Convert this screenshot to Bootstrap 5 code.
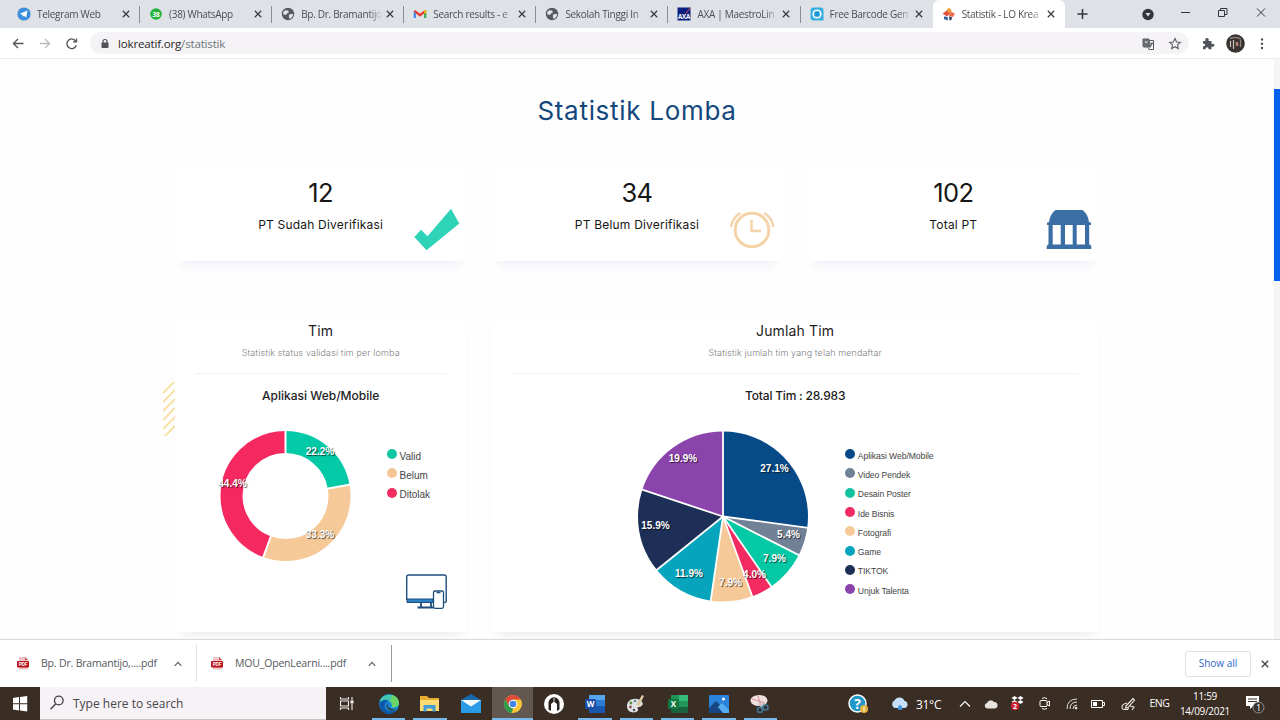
<!DOCTYPE html>
<html lang="id">
<head>
<meta charset="utf-8">
<title>Statistik - LO Kreatif</title>
<link rel="stylesheet" href="https://cdn.jsdelivr.net/npm/bootstrap@5.3.0/dist/css/bootstrap.min.css">
<style>
body{width:1280px;height:720px;overflow:hidden;font-family:"Open Sans","Noto Sans",sans-serif;background:#fff}
svg{display:block;flex:none}
.tabstrip{height:28px;background:#dee1e6;padding-left:8px}
.btab{width:132.1px;height:28px;padding-left:9px;font-size:10px;letter-spacing:-.3px;color:#4b4f54;flex:none;position:relative}
.btab .ttl{width:84px;margin-left:6px;white-space:nowrap;-webkit-mask-image:linear-gradient(90deg,#000 68px,transparent 82px);mask-image:linear-gradient(90deg,#000 68px,transparent 82px)}
.btab.sep{border-right:1px solid #8b8e93;height:17px}
.btab.on{background:#fff;border-radius:6px 6px 0 0;align-self:flex-end;height:28px}
.toolbar{height:31px;border-bottom:1px solid #ececee}
.omni{height:22px;border-radius:11px;background:#f5f3f5;width:1099px;margin-left:5px}
.url{font-size:11.6px;color:#26282b;letter-spacing:-.2px;padding-top:2px}
.page{height:580px;background:#fefefe;font-family:Inter,"Open Sans",sans-serif}
.inner{width:925px;margin-left:174.5px}
.scroller{width:6px;background:#f5f5f6}
.thumb{height:192px;margin-top:30px;background:#0560ee}
.h-main{color:#14487c;font-size:26px;line-height:34px;font-weight:400;letter-spacing:.7px;padding-top:35px;margin:0}
.stats{padding-top:37px}
.panels{padding-top:55px}
.stat,.panel{background:#fff;box-shadow:0 0 3px rgba(40,40,120,.02),0 12px 9px -8px rgba(60,60,190,.075);border-radius:4px}
.panel{box-shadow:0 0 3px rgba(40,40,120,.02),0 10px 10px -6px rgba(60,60,90,.08)}
.stat{height:96px;position:relative;color:#161616}
.stat .num{font-size:25.5px;line-height:30px;font-weight:400;letter-spacing:-.6px;padding-top:13px}
.stat .lbl{font-size:12px;line-height:16px;margin-top:9px;font-weight:400;letter-spacing:.2px}
.stat svg{position:absolute;right:6px;bottom:9px}
.panel{height:316px;position:relative}
.panel .t1{font-size:14px;line-height:18px;font-weight:400;letter-spacing:.15px;padding-top:6px;color:#1c1c1c}
.panel .t2{font-size:9px;line-height:12px;color:#808080;margin-top:7px;font-weight:300;letter-spacing:.12px}
.panel .rule{height:1px;background:#f2f2f2;margin:14px 20px 0}
.panel .t3{font-size:12px;line-height:16px;font-weight:450;margin-top:14px;margin-bottom:-1px;color:#1c1c1c}
.panel .total{letter-spacing:-.2px}
.chartbox{height:200px}
.pct{font:bold 10px "Liberation Sans",sans-serif;fill:#fff;text-anchor:middle;text-shadow:1px 1px 1px rgba(0,0,0,.65)}
.leg{font-family:"Liberation Sans",sans-serif;color:#444;padding-top:42px}
.leg div{height:19.3px}
.leg span{padding:3px 0 0 3px}
.leg i{width:10px;height:10px;border-radius:50%;flex:none;margin-top:-1px}
.leg-lg{padding-left:6px;font-size:10px}
.leg-sm{padding-left:14px;font-size:8.6px;letter-spacing:-.08px}
.devices{position:absolute;right:20px;bottom:22px}
.hatch{position:absolute;left:-12px;top:66px}
.dlbar{height:48px;border-top:1px solid #d9d9dc;background:#fff;font-size:10.5px;letter-spacing:-.18px;color:#55585c}
.dl{height:37px;white-space:nowrap;flex:none}
.dl span{width:145px;padding-left:12px}
.showall{width:66px;height:26px;border:1px solid #dfe1e5;border-radius:3px;color:#2f66c8;font-size:10px;font-weight:500;letter-spacing:0}
.taskbar{height:33px;background:#3a2d24;color:#fff}
.find{width:286px;height:33px;background:#f6f2f5;color:#45464a;font-size:12px;padding-left:10px;border-bottom:1px solid #c9c4c4}
.app{width:41.3px;height:33px;position:relative}
.app.run::after{content:"";position:absolute;left:4px;right:4px;bottom:0;height:2px;background:#76b9ed}
.app.cur{background:#62584f}
.app.cur::after{left:0;right:0}
.tray>div{display:flex;align-items:center;justify-content:center;height:33px;flex:none}
</style>
</head>
<body class="d-flex flex-column">
<svg width="0" height="0" class="position-absolute">
 <symbol id="x" viewBox="0 0 10 10"><path d="M1.800 1.800 8.200 8.200M8.200 1.800 1.800 8.200" stroke="#3c4043" stroke-width="1.300" fill="none"/></symbol>
 <symbol id="globe" viewBox="0 0 14 14"><circle cx="7" cy="7" r="6.200" fill="#55595e"/><path d="M2 5.500 4 3.200l3 .4 1 1.600-2 1.200-1 1.500-2.500-.3ZM8 7.500l3.500-.8.800 1.300-1.800 3-2 .9-.6-2.200Z" fill="#dee1e6"/></symbol>
 <symbol id="up" viewBox="0 0 8 6"><path d="m.8 4.800 3.200-3.400 3.200 3.400" fill="none" stroke="#5b5e62" stroke-width="1.200"/></symbol>
</svg>

<header>
 <div class="tabstrip d-flex align-items-center">
  <div class="btab sep d-flex align-items-center"><svg width="14" height="14" viewBox="0 0 14 14"><circle cx="7" cy="7" r="6.600" fill="#3d8ddd"/><path d="m2.700 6.800 7.800-3.200-1.300 7-2.400-1.800-1.200 1-.2-2Z" fill="#fff"/></svg><span class="ttl">Telegram Web</span><svg width="10" height="10"><use href="#x"/></svg></div>
  <div class="btab sep d-flex align-items-center"><svg width="14" height="14" viewBox="0 0 14 14"><circle cx="7" cy="7" r="5.800" fill="#23b33a"/><text x="7" y="9.500" font-size="6.500" font-weight="bold" text-anchor="middle" fill="#fff">38</text></svg><span class="ttl">(38) WhatsApp</span><svg width="10" height="10"><use href="#x"/></svg></div>
  <div class="btab sep d-flex align-items-center"><svg width="14" height="14"><use href="#globe"/></svg><span class="ttl">Bp. Dr. Bramantijo</span><svg width="10" height="10"><use href="#x"/></svg></div>
  <div class="btab sep d-flex align-items-center"><svg width="14" height="14" viewBox="0 0 14 14"><path d="M1.800 11V4" stroke="#4285f4" stroke-width="2.200"/><path d="M12.200 11V4" stroke="#34a853" stroke-width="2.200"/><path d="m1.500 3.800 5.500 4.400 5.500-4.400" stroke="#e53b30" stroke-width="2.300" fill="none"/><path d="M12.200 3.200v3" stroke="#fbbc04" stroke-width="2.200"/></svg><span class="ttl">Search results - e</span><svg width="10" height="10"><use href="#x"/></svg></div>
  <div class="btab sep d-flex align-items-center"><svg width="14" height="14"><use href="#globe"/></svg><span class="ttl">Sekolah Tinggi In</span><svg width="10" height="10"><use href="#x"/></svg></div>
  <div class="btab sep d-flex align-items-center"><svg width="14" height="14" viewBox="0 0 14 14"><rect x=".5" y=".5" width="13" height="13" fill="#0b1f7e"/><path d="M8.500 7 13.500.5" stroke="#d8505a"/><text x="7" y="11.500" font-size="6.200" font-weight="bold" text-anchor="middle" fill="#fff">AXA</text></svg><span class="ttl">AXA | MaestroLin</span><svg width="10" height="10"><use href="#x"/></svg></div>
  <div class="btab d-flex align-items-center"><svg width="14" height="14" viewBox="0 0 14 14"><path d="M3.500.5h7q3 0 3 3v10h-10q-3 0-3-3v-7q0-3 3-3Z" fill="#35aee2"/><circle cx="7" cy="7" r="4.600" fill="#fff"/><rect x="4.300" y="4.300" width="5.400" height="5.400" rx="1.500" fill="#1b96d4"/></svg><span class="ttl">Free Barcode Gen</span><svg width="10" height="10"><use href="#x"/></svg></div>
  <div class="btab on d-flex align-items-center"><svg width="14" height="14" viewBox="0 0 14 14"><path d="m7 .5 2.800 3.200L7 6.500 4 4Z" fill="#f29a38"/><path d="m.5 6.500 4-2.700 3.500 3-3 2.700Z" fill="#e2533f"/><path d="m8 4.500 5 2-2 3.500-4-1Z" fill="#ef6b4b"/><path d="m2 9.500 3.500.5.500 3.500-4-1.500Z" fill="#245c9b"/><path d="m7 9.500 3 .5-.5 3-2 .5Z" fill="#31446c"/></svg><span class="ttl">Statistik - LO Krea</span><svg width="10" height="10"><use href="#x"/></svg></div>
  <svg width="207" height="28" viewBox="1065 0 207 28" fill="none" stroke="#33363a"><path d="M1077.500 14h10M1082.500 9v10" stroke-width="1.500"/><circle cx="1148" cy="14.500" r="5.700" fill="#33363a" stroke="none"/><path d="M1145.500 13h5l-2.500 3.500Z" fill="#dee1e6" stroke="none"/><path d="M1181 12.500h9"/><path d="M1218.500 10.500h6v6h-6ZM1220.500 10V8.500h6.500v6h-2M1257 8.500l8 8M1265 8.500l-8 8"/></svg>
 </div>
 <div class="toolbar d-flex align-items-center">
  <svg width="85" height="30" viewBox="0 28 85 30" fill="none" stroke="#505458" stroke-width="1.300"><path d="M23.500 43.500h-10M18 39l-4.600 4.500L18 48"/><path d="M40 43.500h10M45 39l4.600 4.500L45 48" stroke="#b9bbbe"/><path d="M76 41.500a4.800 4.800 0 1 0 .3 3.800M76.500 38.500v3.300h-3.500"/></svg>
  <div class="omni d-flex align-items-center">
   <svg width="28" height="22" viewBox="90 32 28 22"><rect x="101.500" y="42.500" width="7" height="5.500" rx=".8" fill="#505458"/><path d="M103 43v-1.500a2 2 0 0 1 4 0V43" fill="none" stroke="#505458" stroke-width="1.200"/></svg>
   <span class="url">lokreatif.org<span class="text-secondary">/statistik</span></span>
   <svg class="ms-auto" width="52" height="22" viewBox="1137 32 52 22" fill="none" stroke="#5a5e62"><path d="M1143 39h6l1.500 8h-6.500q-1 0-1-1Z" fill="#6b6f73"/><path d="M1149.500 40.500h4v9h-4.500l-.8-2M1150.500 43.500h3M1152 42.500v1q-.5 2-1.500 3"/><path d="M1145 42h2.500" stroke="#fff"/><path d="m1175 38.500 1.600 3.500 3.700.4-2.800 2.500.8 3.700-3.300-1.900-3.300 1.900.8-3.700-2.800-2.500 3.700-.4Z" stroke-width="1.100"/></svg>
  </div>
  <svg width="91" height="30" viewBox="1189 28 91 30"><path d="M1203 41h2.500q-.8-3 1.500-3t1.500 3h3v3q3-.8 3 1.200t-3 1.300v2.700h-2.800q0-2-1.700-2t-1.500 2h-2.500v-2.700q2.200 0 2.200-1.400T1203 43.500Z" fill="#50545a"/><circle cx="1235.500" cy="43.500" r="9.300" fill="#383330"/><path d="M1230 38.500q5-2 11 .5" stroke="#8c7e77" stroke-width="1.500" fill="none"/><path d="M1230.500 41v6M1233.500 40v9" stroke="#c9c3bf" stroke-width="1.200"/><path d="M1240.500 40v7" stroke="#8f8984" stroke-width="1.300"/><path d="m1236.500 42 1 4" stroke="#b87f73" stroke-width="2.500"/><g fill="#50545a"><circle cx="1262" cy="39.500" r="1.200"/><circle cx="1262" cy="43.700" r="1.200"/><circle cx="1262" cy="48" r="1.200"/></g></svg>
 </div>
</header>

<main class="page d-flex overflow-hidden">
 <div class="flex-grow-1">
  <div class="inner">
   <h1 class="h-main text-center">Statistik Lomba</h1>
   <div class="row gx-4 text-center stats">
    <div class="col-4"><div class="stat"><div class="num">12</div><div class="lbl">PT Sudah Diverifikasi</div>
     <svg width="48" height="44" viewBox="412 208 48 44"><path d="m413.300 237 6.700-7.200 6.500 6.500L450 208.700l8.300 14.800-32.800 26.800Z" fill="#2fd3b8"/></svg></div></div>
    <div class="col-4"><div class="stat"><div class="num">34</div><div class="lbl">PT Belum Diverifikasi</div>
     <svg width="48" height="44" viewBox="729 208 48 44" fill="none" stroke="#f5d3a8"><circle cx="752" cy="230" r="16.800" stroke-width="3"/><path d="M751.500 220v11h9.500" stroke-width="2.500"/><path d="M731 227q1.500-9.500 9.500-14M773.500 227q-1.500-9.500-9.500-14" stroke-width="2.400"/></svg></div></div>
    <div class="col-4"><div class="stat"><div class="num">102</div><div class="lbl">Total PT</div>
     <svg width="48" height="44" viewBox="1045 208 48 44" fill="#3b6ea5"><path d="M1055.500 210h27q5.500 4 6.500 12l2 .8v2.200h-44v-2.200l2-.8q1-8 6.500-12Z"/><path d="M1048.500 224h4.200v21h-4.200ZM1060.700 224h4.300v21h-4.300ZM1072.700 224h4v21h-4ZM1085 224h4.200v21h-4.200Z"/><path d="M1048 244.500h42l1.300 1.500v3h-44.600v-3Z"/></svg></div></div>
   </div>
   <div class="row gx-4 text-center panels">
    <div class="col-4"><div class="panel">
     <svg class="hatch" width="12" height="54" viewBox="0 0 12 54"><g stroke="#f8dfa0" stroke-width="1.800"><path d="M0 11 12-1M0 20 12 8M0 29 12 17M0 38 12 26M0 47 12 35M0 56 12 44"/></g></svg>
     <div class="t1">Tim</div><div class="t2">Statistik status validasi tim per lomba</div><div class="rule"></div><div class="t3">Aplikasi Web/Mobile</div>
     <div class="chartbox d-flex">
      <svg width="206" height="200" viewBox="174.500 403 206 200">
       <g fill="none" stroke-width="22" transform="rotate(-90 285 496)"><circle cx="285" cy="496" r="54" stroke="#03c9a6" pathLength="100" stroke-dasharray="22.3 77.7"/><circle cx="285" cy="496" r="54" stroke="#f6c998" pathLength="100" stroke-dasharray="33.4 66.6" stroke-dashoffset="-22.2"/><circle cx="285" cy="496" r="54" stroke="#f52860" pathLength="100" stroke-dasharray="44.4 55.6" stroke-dashoffset="-55.6"/></g>
       <g stroke="#fff" stroke-width="2"><path d="M285 454v-24"/><path d="M285 454v-24" transform="rotate(80 285 496)"/><path d="M285 454v-24" transform="rotate(200 285 496)"/></g>
       <g class="pct"><text x="319.500" y="455">22.2%</text><text x="319.500" y="538">33.3%</text><text x="232" y="487">44.4%</text></g>
      </svg>
      <div class="leg leg-lg text-start">
       <div class="d-flex align-items-center"><i style="background:#0fc6a2"></i><span>Valid</span></div><div class="d-flex align-items-center"><i style="background:#f6c595"></i><span>Belum</span></div><div class="d-flex align-items-center"><i style="background:#f12c60"></i><span>Ditolak</span></div></div>
     </div>
     <svg class="devices" width="42" height="37" viewBox="404 573 42 37"><path d="M405.700 600v-23q0-2 2-2h35.500q2 0 2 2v24q0 1.500-2 1.500" fill="none" stroke="#1f4e7d" stroke-width="1.400"/><path d="M406 599h26v3.500h-26Z" fill="#2b82c5" stroke="#1f4e7d"/><path d="M420 603v4M430 603v4M416.500 607.500h16" stroke="#1f4e7d" stroke-width="1.800"/><rect x="432.500" y="591" width="10" height="17.300" rx="1.500" fill="#fff" stroke="#1f4e7d" stroke-width="1.300"/><path d="M435.500 592.500h4" stroke="#1f4e7d" stroke-width="1.500"/></svg>
    </div></div>
    <div class="col-8"><div class="panel">
     <div class="t1">Jumlah Tim</div><div class="t2">Statistik jumlah tim yang telah mendaftar</div><div class="rule"></div><div class="t3 total">Total Tim : 28.983</div>
     <div class="chartbox d-flex">
      <svg width="340" height="200" viewBox="490.500 403 340 200">
       <g fill="none" stroke-width="85" transform="rotate(-90 722.500 516.500)">
        <circle cx="722.500" cy="516.500" r="42.500" stroke="#064b87" pathLength="100" stroke-dasharray="27.1 72.9"/>
        <circle cx="722.500" cy="516.500" r="42.500" stroke="#718297" pathLength="100" stroke-dasharray="5.4 94.6" stroke-dashoffset="-27.1"/>
        <circle cx="722.500" cy="516.500" r="42.500" stroke="#05c8a5" pathLength="100" stroke-dasharray="7.9 92.1" stroke-dashoffset="-32.5"/>
        <circle cx="722.500" cy="516.500" r="42.500" stroke="#f12a61" pathLength="100" stroke-dasharray="4 96" stroke-dashoffset="-40.4"/>
        <circle cx="722.500" cy="516.500" r="42.500" stroke="#f6c998" pathLength="100" stroke-dasharray="7.9 92.1" stroke-dashoffset="-44.4"/>
        <circle cx="722.500" cy="516.500" r="42.500" stroke="#06a5bd" pathLength="100" stroke-dasharray="11.9 88.1" stroke-dashoffset="-52.3"/>
        <circle cx="722.500" cy="516.500" r="42.500" stroke="#1d2f56" pathLength="100" stroke-dasharray="15.9 84.1" stroke-dashoffset="-64.2"/>
        <circle cx="722.500" cy="516.500" r="42.500" stroke="#8c44ad" pathLength="100" stroke-dasharray="19.9 80.1" stroke-dashoffset="-80.1"/></g>
       <g stroke="#fff" stroke-width="1.800" transform="translate(722.500 516.500)"><path d="M0 0v-86"/><path d="M0 0v-86" transform="rotate(97.560)"/><path d="M0 0v-86" transform="rotate(117)"/><path d="M0 0v-86" transform="rotate(145.440)"/><path d="M0 0v-86" transform="rotate(159.840)"/><path d="M0 0v-86" transform="rotate(188.280)"/><path d="M0 0v-86" transform="rotate(231.120)"/><path d="M0 0v-86" transform="rotate(288.360)"/></g>
       <g class="pct"><text x="774" y="472">27.1%</text><text x="788" y="537.500">5.4%</text><text x="774" y="562">7.9%</text><text x="754" y="578">4.0%</text><text x="730" y="585.500">7.9%</text><text x="688.500" y="576.500">11.9%</text><text x="655" y="528.500">15.9%</text><text x="682.500" y="461.500">19.9%</text></g>
      </svg>
      <div class="leg leg-sm text-start">
       <div class="d-flex align-items-center"><i style="background:#064b87"></i><span>Aplikasi Web/Mobile</span></div><div class="d-flex align-items-center"><i style="background:#718297"></i><span>Video Pendek</span></div><div class="d-flex align-items-center"><i style="background:#13c3a0"></i><span>Desain Poster</span></div><div class="d-flex align-items-center"><i style="background:#f12a61"></i><span>Ide Bisnis</span></div><div class="d-flex align-items-center"><i style="background:#f6c998"></i><span>Fotografi</span></div><div class="d-flex align-items-center"><i style="background:#06a5bd"></i><span>Game</span></div><div class="d-flex align-items-center"><i style="background:#1d2f56"></i><span>TIKTOK</span></div><div class="d-flex align-items-center"><i style="background:#8c44ad"></i><span>Unjuk Talenta</span></div></div>
     </div>
    </div></div>
   </div>
  </div>
 </div>
 <div class="scroller"><div class="thumb"></div></div>
</main>

<section class="dlbar d-flex align-items-center">
 <div class="dl d-flex align-items-center border-end" style="width:197px;padding-left:17px"><svg width="12" height="13" viewBox="0 0 12 13"><path d="M2 0h6l3 3v9.500H2Z" fill="#f1c2c4"/><path d="M8 0v3h3" fill="#c55"/><rect y="4" width="12" height="6.500" rx="1" fill="#b5121b"/><text x="6" y="9" font-size="4.600" font-weight="bold" text-anchor="middle" fill="#fff" font-family="Liberation Sans">PDF</text></svg><span>Bp. Dr. Bramantijo,....pdf</span><svg width="8" height="6"><use href="#up"/></svg></div>
 <div class="dl d-flex align-items-center" style="width:195px;padding-left:14px;border-right:1px solid #9a9a9d"><svg width="12" height="13" viewBox="0 0 12 13"><path d="M2 0h6l3 3v9.500H2Z" fill="#f1c2c4"/><path d="M8 0v3h3" fill="#c55"/><rect y="4" width="12" height="6.500" rx="1" fill="#b5121b"/><text x="6" y="9" font-size="4.600" font-weight="bold" text-anchor="middle" fill="#fff" font-family="Liberation Sans">PDF</text></svg><span>MOU_OpenLearni....pdf</span><svg width="8" height="6"><use href="#up"/></svg></div>
 <div class="showall ms-auto d-flex align-items-center justify-content-center">Show all</div>
 <svg width="10" height="10" style="margin:0 10px 0 9px"><use href="#x"/></svg>
</section>

<footer class="taskbar d-flex">
 <svg width="40" height="33" viewBox="0 687 40 33" fill="#fff"><path d="m13 698 6-.9v6.200h-6ZM20 697l7.200-1v7.300H20ZM13 704.200h6v6.200l-6-.9ZM20 704.200h7.200v7.400l-7.200-1Z"/></svg>
 <div class="find d-flex align-items-center"><svg width="14" height="16" viewBox="0 0 14 16" fill="none" stroke="#3e3f43" stroke-width="1.300"><circle cx="8.800" cy="5.500" r="4.300"/><path d="m5.800 8.700-5.300 5.500"/></svg><span style="padding:2px 0 0 9px">Type here to search</span></div>
 <svg width="42" height="33" viewBox="326 687 42 33" fill="none" stroke="#eee" stroke-width="1.100"><path d="M340.500 697v2h8v-2M340.500 710v-2h8v2M340.500 701h8v5h-8ZM352 697v3M352 704v6"/><path d="M351 701h2v2h-2Z" fill="#fff"/></svg>
 <div class="app run d-flex align-items-center justify-content-center"><svg width="22" height="22" viewBox="0 0 22 22"><circle cx="11" cy="11" r="10" fill="#1787d8"/><path d="M1.500 8.500C4 0 18-1.500 21 9.500c.5 4-4 6-7.500 4.500 2-4-3-7.500-7.500-6-2 0-3.500 0-4.500.5Z" fill="#44c7b0"/><path d="M14 2q7 2 7 8c0 4-5 5-7.500 4 1-2 .5-4-1-5Z" fill="#6bd467"/><path d="M6.500 12.500c0 5 5 7 12 5-6 6-16 3-17-5 0-4 5-7 9-5-2 1-4 2.500-4 5Z" fill="#0d57a6"/><path d="M10.500 9.500q-2 2 0 5 3 3 8.500 1.500-2 1.500-5 1.500c-5 0-7-6-3.500-8Z" fill="#3a2d24"/></svg></div>
 <div class="app run d-flex align-items-center justify-content-center"><svg width="20" height="18" viewBox="0 0 20 18"><path d="M0 1h7l2 2h10v13H0Z" fill="#e7ae31"/><path d="M0 5h19v11H0Z" fill="#fcdc72"/><path d="M3.500 16.500V10h12v6.500h-3v-3h-6v3Z" fill="#3f9bd9"/></svg></div>
 <div class="app d-flex align-items-center justify-content-center"><svg width="20" height="19" viewBox="0 0 20 19"><path d="m0 6 10-6 10 6v4H0Z" fill="#1769ac"/><path d="M0 6h20v13H0Z" fill="#2a9be5"/><path d="M0 6h20l-10 6.500Z" fill="#f3f8fc"/></svg></div>
 <div class="app run cur d-flex align-items-center justify-content-center"><svg width="20" height="20" viewBox="0 0 20 20"><circle cx="10" cy="10" r="9" fill="#f9c53a"/><path d="M2.200 5.500A9 9 0 0 1 17.800 5.500H10L6 12Z" fill="#de4a3b"/><path d="M2.200 5.500 6.200 12.300 10 14.200 8.800 19A9 9 0 0 1 2.200 5.500Z" fill="#2e9e4e"/><circle cx="10" cy="10" r="4.300" fill="#fff"/><circle cx="10" cy="10" r="3.300" fill="#4285e8"/></svg></div>
 <div class="app d-flex align-items-center justify-content-center"><svg width="22" height="22" viewBox="0 0 22 22"><circle cx="11" cy="11" r="10" fill="#fff"/><path d="M5.500 16.500V9q1-4 5.500-5 4.500 1 5.500 5v7.500l-2.500 1.500v-7l-3-2.500L8 11v7Z" fill="#282320"/><path d="M11 4.500v4" stroke="#fff" stroke-width=".8"/></svg></div>
 <div class="app run d-flex align-items-center justify-content-center"><svg width="20" height="18" viewBox="0 0 20 18"><rect x="4" width="16" height="18" rx="1" fill="#2b7cd3"/><path d="M4 0h16v5H4Z" fill="#55a6ec"/><path d="M4 11h16v7H4Z" fill="#1857ae"/><rect y="4" width="11" height="10" rx="1" fill="#1a4ba5"/><text x="5.500" y="12" font-size="8" font-weight="bold" text-anchor="middle" fill="#fff">W</text></svg></div>
 <div class="app run d-flex align-items-center justify-content-center"><svg width="20" height="20" viewBox="0 0 20 20"><path d="M1 12C1 6 8 3 14 6c5 3 2 7-1 7-2 0-2 1-1 2 1 3-4 4-7 3q-4-1-4-6Z" fill="#dfe3e3"/><path d="m10 11 6-10 2 1-5 10Z" fill="#dcc8a2"/><circle cx="5" cy="9" r="1.400" fill="#5c8d47"/><circle cx="9" cy="7" r="1.300" fill="#668aa0"/><circle cx="4.500" cy="13" r="1.400" fill="#8b5b51"/><circle cx="8" cy="16" r="1.300" fill="#555"/></svg></div>
 <div class="app run d-flex align-items-center justify-content-center"><svg width="20" height="18" viewBox="0 0 20 18"><rect x="3" width="17" height="18" rx="1" fill="#22955a"/><path d="M11 0h9v6h-9Z" fill="#35bd78"/><path d="M3 12h17v6H3Z" fill="#17633c"/><rect y="4" width="11" height="10" rx="1" fill="#127a41"/><text x="5.500" y="12" font-size="8" font-weight="bold" text-anchor="middle" fill="#fff">X</text></svg></div>
 <div class="app run d-flex align-items-center justify-content-center"><svg width="20" height="18" viewBox="0 0 20 18"><rect width="20" height="18" rx="1" fill="#2c83db"/><path d="m0 13 7-7 12 12H0Z" fill="#174785"/><path d="m9 12 4-4 7 7v3h-6Z" fill="#55aef0"/><circle cx="14.500" cy="4" r="1.500" fill="#fff"/></svg></div>
 <div class="app run d-flex align-items-center justify-content-center"><svg width="20" height="20" viewBox="0 0 20 20"><ellipse cx="9" cy="6.500" rx="8.500" ry="5.500" fill="#f0dfe0"/><path d="m2 5 13 4M8 2l3 10" stroke="#d58d92" stroke-width="1"/><path d="m9 9 3 5M14 8l-3 6" stroke="#bbb" stroke-width="1.500"/><circle cx="10" cy="16" r="2.500" fill="none" stroke="#3e799b" stroke-width="1.600"/><circle cx="15.500" cy="13.500" r="2.500" fill="none" stroke="#3e799b" stroke-width="1.600"/></svg></div>
 <div class="tray d-flex ms-auto" style="width:446px">
  <div style="width:48px"><svg width="20" height="20" viewBox="0 0 20 20"><circle cx="9.500" cy="9.500" r="8.500" fill="#2196c9" stroke="#fff" stroke-width="1.500"/><text x="9.500" y="14.500" font-size="14" font-weight="bold" text-anchor="middle" fill="#fff">?</text><circle cx="16" cy="15" r="4" fill="#e6b23a"/><path d="M16 12.500v5" stroke="#fff"/></svg></div>
  <div style="width:32px;padding-left:3px"><svg width="18" height="15" viewBox="0 0 18 15"><path d="M4 12a4 4 0 0 1-.5-7.500A5.500 5.500 0 0 1 13.500 5 3.600 3.600 0 0 1 14 12Z" fill="#c7e1fa"/><path d="M9 8.500q4 3.500 1.500 5.500h-3Q5.500 12 9 8.500Z" fill="#3f91db"/></svg></div>
  <div style="width:38px;font-size:12px;letter-spacing:-.3px;justify-content:flex-start;padding:2px 0 0 2px">31°C</div>
  <div style="width:26px"><svg width="12" height="8" viewBox="0 0 12 8"><path d="m1 6.500 5-5 5 5" fill="none" stroke="#fff" stroke-width="1.100"/></svg></div>
  <div style="width:26px"><svg width="14" height="10" viewBox="0 0 14 10"><path d="M3 9.500a2.800 2.800 0 0 1 0-5.500 4 4 0 0 1 7-1 3.300 3.300 0 0 1 1 6.500Z" fill="#e6e2de"/></svg></div>
  <div style="width:26px"><svg width="13" height="15" viewBox="0 0 13 15"><path d="m3.500 0 3 2-3 2-3-2ZM9.500 0l3 2-3 2-3-2ZM3.500 4l3 2-3 2-3-2ZM9.500 4l3 2-3 2-3-2Z" fill="#fff"/><circle cx="4" cy="10" r="4.300" fill="#cf1c30"/><text x="4" y="12.500" font-size="7" font-weight="bold" text-anchor="middle" fill="#fff">2</text></svg></div>
  <div style="width:30px"><svg width="12" height="13" viewBox="0 0 12 13" fill="none" stroke="#fff"><rect x="1" y="3.500" width="7" height="6" rx="1"/><path d="m8 5.500 2.500-1.500v5L8 7.500M3 1.500q2.500-1.500 5 0M3 11.500q2.500 1.500 5 0"/></svg></div>
  <div style="width:24px"><svg width="12" height="12" viewBox="0 0 12 12" fill="none" stroke="#ddd"><path d="M1 11Q1 1 11 1M4 11q0-7 7-7M7 11q0-4 4-4"/><circle cx="10" cy="10" r="1" fill="#fff"/></svg></div>
  <div style="width:28px"><svg width="14" height="8" viewBox="0 0 14 8"><path d="M.5.500h11v7H.5ZM12 2.500h1.500v3H12" fill="none" stroke="#fff"/><path d="M2 2h4v4H2Z" fill="#fff"/></svg></div>
  <div style="width:32px"><svg width="15" height="14" viewBox="0 0 15 14" fill="none" stroke="#eee" stroke-width="1.100"><path d="M5 9 12 1.500l1.500 1.500L7 10.500l-2.500.5ZM6 6Q1 7 1 10t4 2.500Q8 13 7 10M9 9l4 1-2 3"/></svg></div>
  <div style="width:31px;font-size:10.500px;letter-spacing:-.4px;padding-top:1px">ENG</div>
  <div class="text-center" style="width:60px;font-size:10px;line-height:15px;letter-spacing:-.3px">11:59<br>14/09/2021</div>
  <div style="width:40px"><svg width="20" height="20" viewBox="0 0 20 20"><path d="M1 2h13v10H8l-3 3v-3H1Z" fill="#fff"/><path d="M3 5h9M3 7.500h9" stroke="#3a2d24"/><circle cx="13.500" cy="13.500" r="5.500" fill="#3a302a" stroke="#aaa" stroke-width=".8"/><text x="13.500" y="17" font-size="9" text-anchor="middle" fill="#fff">1</text></svg></div>
 </div>
</footer>
<script src="https://cdn.jsdelivr.net/npm/bootstrap@5.3.0/dist/js/bootstrap.bundle.min.js"></script>
</body>
</html>
